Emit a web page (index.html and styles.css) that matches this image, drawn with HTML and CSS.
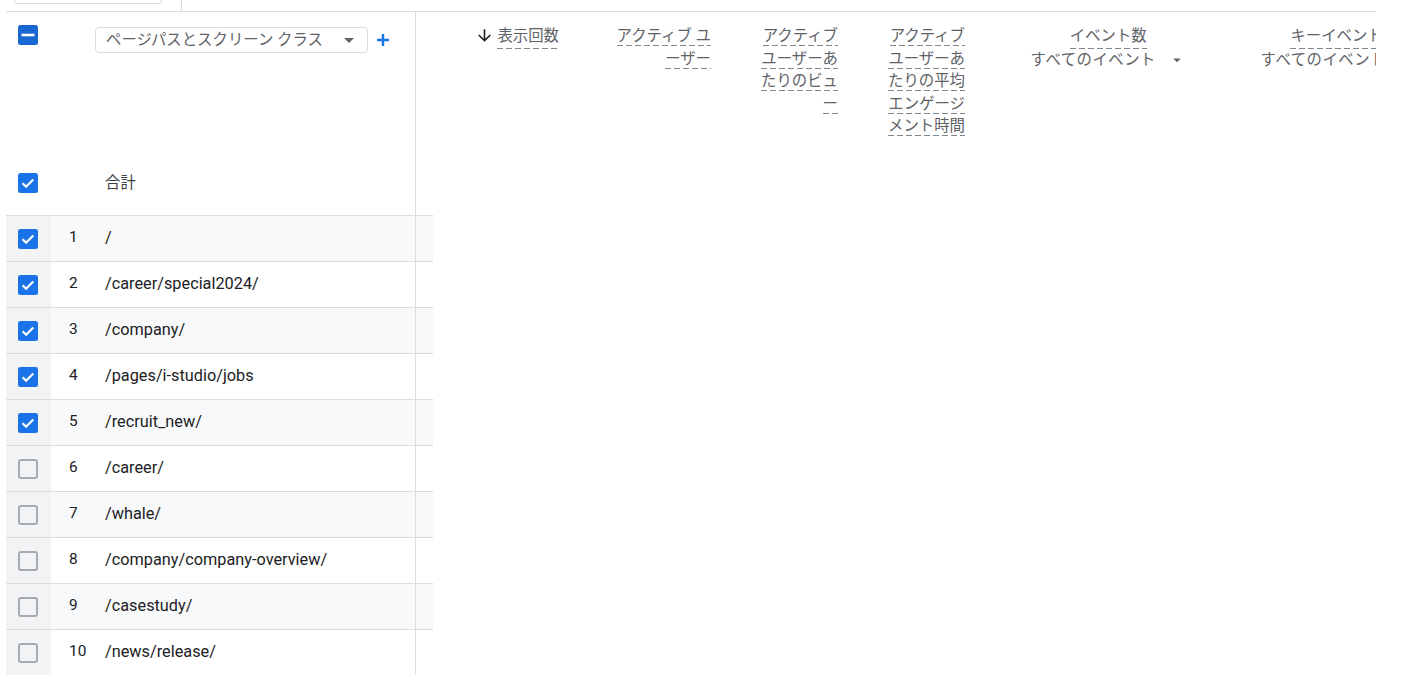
FILE: index.html
```html
<!DOCTYPE html>
<html lang="ja">
<head>
	<meta charset="UTF-8" />
	<title>ページとスクリーン</title>
	<link rel="stylesheet" href="styles.css">
</head>
<body>
	<div class="topbar">
		<div class="tabStub"></div>
		<div class="topSep"></div>
	</div>
	<div class="report">
		<div class="frozen">
			<div class="fhead">
				<div class="cbcell">
					<svg class="cb" viewBox="0 0 20 20"><rect width="20" height="20" rx="2.5" fill="#1967d2"/><path d="M3.5 10h13" stroke="#fff" stroke-width="2.6"/></svg>
				</div>
				<div class="dimSelect">
					<span>ページパスとスクリーン クラス</span>
					<svg class="dropArrow" viewBox="0 0 24 24"><path d="M7 10l5 5 5-5z" fill="#5f6368"/></svg>
				</div>
				<svg class="addDim" viewBox="0 0 14 14"><path d="M7 1v12M1 7h12" stroke="#1a73e8" stroke-width="2.4"/></svg>
			</div>
			<div class="totalRow">
				<div class="cbcell">
					<svg class="cb" viewBox="0 0 20 20"><rect width="20" height="20" rx="2.5" fill="#1a73e8"/><path d="M4.6 10.3l3.5 3.4 7.2-7.2" fill="none" stroke="#fff" stroke-width="2.2"/></svg>
				</div>
				<span class="totalLabel">合計</span>
			</div>
			<div class="row odd">
				<div class="cbcell"><svg class="cb" viewBox="0 0 20 20"><rect width="20" height="20" rx="2.5" fill="#1a73e8"/><path d="M4.6 10.3l3.5 3.4 7.2-7.2" fill="none" stroke="#fff" stroke-width="2.2"/></svg></div>
				<div class="num">1</div><div class="path">/</div>
			</div>
			<div class="row">
				<div class="cbcell"><svg class="cb" viewBox="0 0 20 20"><rect width="20" height="20" rx="2.5" fill="#1a73e8"/><path d="M4.6 10.3l3.5 3.4 7.2-7.2" fill="none" stroke="#fff" stroke-width="2.2"/></svg></div>
				<div class="num">2</div><div class="path">/career/special2024/</div>
			</div>
			<div class="row odd">
				<div class="cbcell"><svg class="cb" viewBox="0 0 20 20"><rect width="20" height="20" rx="2.5" fill="#1a73e8"/><path d="M4.6 10.3l3.5 3.4 7.2-7.2" fill="none" stroke="#fff" stroke-width="2.2"/></svg></div>
				<div class="num">3</div><div class="path">/company/</div>
			</div>
			<div class="row">
				<div class="cbcell"><svg class="cb" viewBox="0 0 20 20"><rect width="20" height="20" rx="2.5" fill="#1a73e8"/><path d="M4.6 10.3l3.5 3.4 7.2-7.2" fill="none" stroke="#fff" stroke-width="2.2"/></svg></div>
				<div class="num">4</div><div class="path">/pages/i-studio/jobs</div>
			</div>
			<div class="row odd">
				<div class="cbcell"><svg class="cb" viewBox="0 0 20 20"><rect width="20" height="20" rx="2.5" fill="#1a73e8"/><path d="M4.6 10.3l3.5 3.4 7.2-7.2" fill="none" stroke="#fff" stroke-width="2.2"/></svg></div>
				<div class="num">5</div><div class="path">/recruit_new/</div>
			</div>
			<div class="row">
				<div class="cbcell"><svg class="cb" viewBox="0 0 20 20"><rect x="1" y="1" width="18" height="18" rx="2" fill="none" stroke="#a7aaaf" stroke-width="2"/></svg></div>
				<div class="num">6</div><div class="path">/career/</div>
			</div>
			<div class="row odd">
				<div class="cbcell"><svg class="cb" viewBox="0 0 20 20"><rect x="1" y="1" width="18" height="18" rx="2" fill="none" stroke="#a7aaaf" stroke-width="2"/></svg></div>
				<div class="num">7</div><div class="path">/whale/</div>
			</div>
			<div class="row">
				<div class="cbcell"><svg class="cb" viewBox="0 0 20 20"><rect x="1" y="1" width="18" height="18" rx="2" fill="none" stroke="#a7aaaf" stroke-width="2"/></svg></div>
				<div class="num">8</div><div class="path">/company/company-overview/</div>
			</div>
			<div class="row odd">
				<div class="cbcell"><svg class="cb" viewBox="0 0 20 20"><rect x="1" y="1" width="18" height="18" rx="2" fill="none" stroke="#a7aaaf" stroke-width="2"/></svg></div>
				<div class="num">9</div><div class="path">/casestudy/</div>
			</div>
			<div class="row last">
				<div class="cbcell"><svg class="cb" viewBox="0 0 20 20"><rect x="1" y="1" width="18" height="18" rx="2" fill="none" stroke="#a7aaaf" stroke-width="2"/></svg></div>
				<div class="num">10</div><div class="path">/news/release/</div>
			</div>
		</div>
		<div class="metrics">
			<div class="mhead">
				<div class="mcol c1">
					<svg class="sortArrow" viewBox="0 0 24 24"><path d="M20 12l-1.41-1.41L13 16.17V4h-2v12.17l-5.58-5.59L4 12l8 8 8-8z" fill="#202124"/></svg><span class="lbl">表示回数</span>
				</div>
				<div class="mcol c2">
					<span class="lbl">アクティブ ユ</span><br><span class="lbl">ーザー</span>
				</div>
				<div class="mcol c3">
					<span class="lbl">アクティブ</span><br><span class="lbl">ユーザーあ</span><br><span class="lbl">たりのビュ</span><br><span class="lbl">ー</span>
				</div>
				<div class="mcol c4">
					<span class="lbl">アクティブ</span><br><span class="lbl">ユーザーあ</span><br><span class="lbl">たりの平均</span><br><span class="lbl">エンゲージ</span><br><span class="lbl">メント時間</span>
				</div>
				<div class="mcol c5">
					<div class="evStack">
						<span class="lbl">イベント数</span>
						<div class="evSelect">すべてのイベント<svg class="dropArrow" viewBox="0 0 24 24"><path d="M7 10l5 5 5-5z" fill="#5f6368"/></svg></div>
					</div>
				</div>
				<div class="mcol c6">
					<div class="evStack">
						<span class="lbl keyLbl">キーイベント数</span>
						<div class="evSelect">すべてのイベント<svg class="dropArrow" viewBox="0 0 24 24"><path d="M7 10l5 5 5-5z" fill="#5f6368"/></svg></div>
					</div>
				</div>
			</div>
			<div class="stub total"></div>
			<div class="stub odd"></div>
			<div class="stub"></div>
			<div class="stub odd"></div>
			<div class="stub"></div>
			<div class="stub odd"></div>
			<div class="stub"></div>
			<div class="stub odd"></div>
			<div class="stub"></div>
			<div class="stub odd"></div>
			<div class="stub last"></div>
		</div>
	</div>
</body>
</html>
```

FILE: styles.css
```css
body {
	margin: 0;
	background-color: #fff;
	font-family: Roboto, "Noto Sans CJK JP", sans-serif;
	font-size: 15.4px;
	color: #202124;
}
.topbar {
	display: flex;
	width: 1370px;
	height: 11px;
	margin-left: 6px;
	border-bottom: 1px solid #dadce0;
}
.tabStub {
	width: 146px;
	height: 3px;
	margin-left: 8px;
	border: 1px solid #dadce0;
	border-top: none;
	border-radius: 0 0 6px 6px;
}
.topSep {
	margin-left: 19px;
	height: 11px;
	border-left: 1px solid #dadce0;
}
.report {
	display: flex;
	width: 1370px;
	margin-left: 6px;
}
.frozen {
	width: 409px;
	flex: none;
	border-right: 1px solid #dadce0;
}
.cbcell {
	width: 45px;
	flex: none;
	display: flex;
	padding-left: 12px;
	box-sizing: border-box;
}
.cb {
	width: 20px;
	height: 20px;
	display: block;
}
.fhead {
	height: 146px;
	display: flex;
	align-items: flex-start;
	padding-top: 13px;
	box-sizing: border-box;
}
.dimSelect {
	display: flex;
	align-items: center;
	width: 273px;
	height: 26px;
	margin: 2px 0 0 44px;
	padding-left: 10px;
	box-sizing: border-box;
	border: 1px solid #dadce0;
	border-radius: 4px;
	color: #5f6368;
	line-height: 20px;
}
.dimSelect span {
	flex: 1;
}
.dropArrow {
	width: 18px;
	height: 18px;
	display: block;
}
.dimSelect .dropArrow {
	width: 24px;
	height: 24px;
	margin-right: 6px;
}
.addDim {
	width: 14px;
	height: 14px;
	margin: 8px 0 0 8px;
}
.totalRow {
	display: flex;
	align-items: flex-start;
	padding-top: 15px;
	border-bottom: 1px solid #dadce0;
	height: 42px;
}
.totalLabel {
	margin-left: 54px;
	line-height: 20px;
	color: #3c4043;
}
.row {
	display: flex;
	align-items: center;
	height: 45px;
	border-bottom: 1px solid #dadce0;
}
.row.odd {
	background-color: #f8f9fa;
}
.row.last {
	border-bottom: none;
}
.row .cbcell {
	align-self: stretch;
	align-items: center;
	background-color: #f1f3f4;
}
.num {
	width: 54px;
	padding-left: 18px;
	box-sizing: border-box;
	margin-bottom: 3px;
}
.path {
	font-size: 16.3px;
	margin-bottom: 3px;
	color: #202124;
}
.metrics {
	flex: 1;
	overflow: hidden;
}
.mhead {
	height: 146px;
	display: flex;
	align-items: flex-start;
	padding-top: 13px;
	box-sizing: border-box;
}
.mcol {
	flex: none;
	padding-right: 16px;
	box-sizing: border-box;
	text-align: right;
	line-height: 22.5px;
}
.c1 { width: 159px; display: flex; justify-content: flex-end; align-items: flex-start; }
.c2 { width: 152px; }
.c3 { width: 127px; }
.c4 { width: 127px; }
.c5 { width: 216px; padding-right: 11px; display: flex; justify-content: flex-end; }
.c6 { width: 231px; padding-right: 12px; display: flex; justify-content: flex-end; }
.sortArrow {
	width: 19px;
	height: 19px;
	margin: 1px 3px 0 0;
}
.lbl {
	color: #5f6368;
	padding-bottom: 1px;
	background-image: linear-gradient(to right, #80868b 62%, transparent 0);
	background-size: 9px 1px;
	background-repeat: repeat-x;
	background-position: 0 100%;
}
.keyLbl {
	margin-left: 12px;
}
.evStack {
	display: flex;
	flex-direction: column;
	align-items: center;
}
.evSelect {
	display: flex;
	align-items: center;
	color: #5f6368;
	white-space: nowrap;
	letter-spacing: 0.5px;
}
.evSelect .dropArrow {
	margin-left: 12px;
}
.stub {
	width: 17px;
	height: 45px;
	border-bottom: 1px solid #dadce0;
}
.stub.total {
	height: 57px;
}
.stub.odd {
	background-color: #f8f9fa;
}
.stub.last {
	border-bottom: none;
}
```
